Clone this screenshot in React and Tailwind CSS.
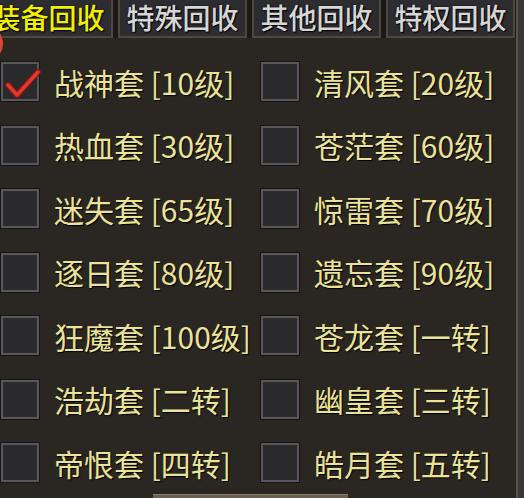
import React from 'react';

const tabs = ['装备回收', '特殊回收', '其他回收', '特权回收'];

const sets = [
  { name: '战神套 [10级]', checked: true },
  { name: '清风套 [20级]' },
  { name: '热血套 [30级]' },
  { name: '苍茫套 [60级]' },
  { name: '迷失套 [65级]' },
  { name: '惊雷套 [70级]' },
  { name: '逐日套 [80级]' },
  { name: '遗忘套 [90级]' },
  { name: '狂魔套 [100级]' },
  { name: '苍龙套 [一转]' },
  { name: '浩劫套 [二转]' },
  { name: '幽皇套 [三转]' },
  { name: '帝恨套 [四转]' },
  { name: '皓月套 [五转]' },
];

const CheckBox = ({ checked }) => (
  <div className="relative w-[38px] h-[39px] shrink-0 border-2 border-[#58565a] bg-[#2a2a2d] shadow-[0_0_0_1px_#151515]">
    {checked && (
      <svg className="absolute left-[2px] top-[4px]" width="36" height="30" viewBox="0 0 36 30">
        <path d="M3 17 L12 27 L33 4" fill="none" stroke="#8a1410" strokeWidth="6" strokeLinecap="round" strokeLinejoin="round" />
        <path d="M3 17 L12 27 L33 4" fill="none" stroke="#e0392e" strokeWidth="3.5" strokeLinecap="round" strokeLinejoin="round" />
      </svg>
    )}
  </div>
);

export default function App() {
  return (
    <div
      className="relative w-[524px] h-[498px] overflow-hidden bg-[#2a2723]"
      style={{ fontFamily: '"Noto Sans CJK SC", "Noto Sans", sans-serif' }}
    >
      {/* tabs */}
      <div className="flex gap-[5px] ml-[-16px] h-[38px] bg-[#1a1918]">
        {tabs.map((t, i) => (
          <div
            key={t}
            className={`w-[129px] h-[38px] shrink-0 text-center border-2 border-t-0 border-[#4e4940] bg-[#2d2c31] text-[28px] leading-[34px] font-medium [text-shadow:0_0_2px_#000,1px_1px_1px_#000] ${
              i === 0 ? 'text-[#f2f000]' : 'text-[#d6d6d6]'
            }`}
          >
            {t}
          </div>
        ))}
      </div>

      {/* red badge edge */}
      <div className="absolute left-[-34px] top-[25px] w-[37px] h-[37px] rounded-full bg-[#d9482a]" />

      {/* list */}
      <div className="grid grid-cols-[260px_260px] mt-[12px] ml-[1px]">
        {sets.map((s) => (
          <div key={s.name} className="h-[63.5px] flex items-center gap-[15px]">
            <CheckBox checked={s.checked} />
            <span className="text-[30px] leading-none text-[#ebe399] whitespace-nowrap [text-shadow:1px_1px_1px_#000]">
              {s.name}
            </span>
          </div>
        ))}
      </div>

      {/* right frame edge */}
      <div className="absolute right-0 top-0 h-full w-[8px] border-l-2 border-[#57524b] bg-[#3a3733]" />

      {/* bottom button top */}
      <div className="absolute left-[153px] top-[494px] w-[195px] h-[10px] bg-[#6a6052] border-t border-[#8a7e6a]" />
    </div>
  );
}
